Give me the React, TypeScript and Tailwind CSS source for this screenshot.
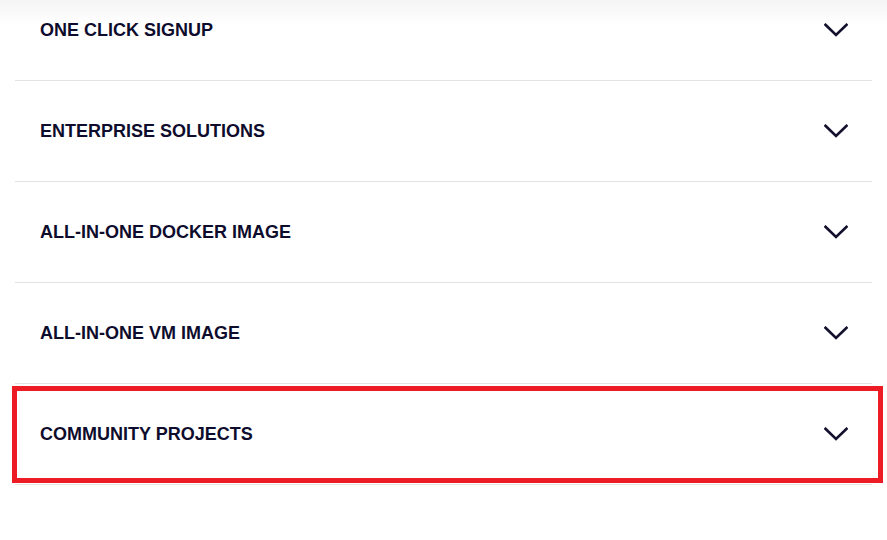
const items = [
  'One Click Signup',
  'Enterprise Solutions',
  'All-in-One Docker Image',
  'All-in-One VM Image',
  'Community Projects',
];

function Chevron() {
  return (
    <svg width="24" height="14" viewBox="0 0 24 14" fill="none" className="shrink-0">
      <path d="M1.5 1.8 L12 12 L22.5 1.8" stroke="#14112e" strokeWidth="2.6" strokeLinecap="square" />
    </svg>
  );
}

export default function App() {
  return (
    <div className="relative w-[887px] h-[540px] overflow-hidden bg-white font-['Liberation_Sans',Arial,sans-serif]">
      {/* faint shadow from the header above */}
      <div className="absolute inset-x-0 top-0 h-6 bg-gradient-to-b from-[#f4f4f4] to-transparent pointer-events-none" />

      <div className="relative px-[15px] -mt-[20px]">
        {items.map((label) => (
          <div
            key={label}
            className="flex h-[101px] items-center justify-between border-b border-[#e3e3e3] pl-[25px] pr-[24px]"
          >
            <span className="text-[18px] font-bold uppercase leading-none text-[#0e0c2c]">{label}</span>
            <Chevron />
          </div>
        ))}
      </div>

      {/* highlight annotation */}
      <div className="absolute left-[12px] top-[386px] h-[97px] w-[871px] border-[5px] border-[#ed1c24] pointer-events-none" />
    </div>
  );
}
